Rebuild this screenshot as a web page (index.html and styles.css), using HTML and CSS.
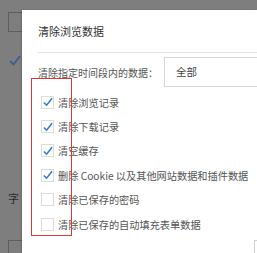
FILE: index.html
```html
<!DOCTYPE html>
<html lang="zh">
<head>
<meta charset="utf-8">
<link rel="stylesheet" href="styles.css">
</head>
<body>
<div class="screen">
  <div class="topbar"></div>
  <div class="side">
    <div class="side-box"></div>
    <div class="side-check">
      <svg width="12" height="11" viewBox="0 0 12 11"><path d="M1 6 L4.5 9.5 L11 1" fill="none" stroke="#3a5f8c" stroke-width="1.8"/></svg>
    </div>
    <div class="side-char">字</div>
    <div class="side-box2"></div>
  </div>
  <div class="dialog">
    <div class="title">清除浏览数据</div>
    <div class="divider"></div>
    <div class="range">
      <span class="range-label">清除指定时间段内的数据：</span>
      <div class="select">全部</div>
    </div>
    <div class="options">
      <label class="opt"><span class="cb on"><svg viewBox="0 0 12 12"><path d="M2 6.5 L5 9.5 L11 2" fill="none" stroke="#2f7bd0" stroke-width="1.7"/></svg></span>清除浏览记录</label>
      <label class="opt"><span class="cb on"><svg viewBox="0 0 12 12"><path d="M2 6.5 L5 9.5 L11 2" fill="none" stroke="#2f7bd0" stroke-width="1.7"/></svg></span>清除下载记录</label>
      <label class="opt"><span class="cb on"><svg viewBox="0 0 12 12"><path d="M2 6.5 L5 9.5 L11 2" fill="none" stroke="#2f7bd0" stroke-width="1.7"/></svg></span>清空缓存</label>
      <label class="opt"><span class="cb on"><svg viewBox="0 0 12 12"><path d="M2 6.5 L5 9.5 L11 2" fill="none" stroke="#2f7bd0" stroke-width="1.7"/></svg></span>删除 Cookie 以及其他网站数据和插件数据</label>
      <label class="opt"><span class="cb"></span>清除已保存的密码</label>
      <label class="opt"><span class="cb"></span>清除已保存的自动填充表单数据</label>
    </div>
    <div class="btn-edge"></div>
  </div>
  <div class="mark"></div>
</div>
</body>
</html>
```
FILE: styles.css
```css
* { box-sizing: border-box; }
html, body { margin: 0; padding: 0; }
body {
  background: #7e7e7e;
  font-family: "Noto Sans CJK SC", "Noto Sans", sans-serif;
  overflow: hidden;
}
.screen {
  position: relative;
  width: 257px;
  height: 253px;
  display: grid;
  grid-template-columns: 22px 1fr;
  grid-template-rows: 10px 1fr;
  overflow: hidden;
}
.topbar {
  grid-column: 1 / 3;
  background: #7e7e7e;
}
.side {
  position: relative;
  background: #7e7e7e;
  padding-top: 2px;
  padding-left: 8px;
  display: flex;
  flex-direction: column;
}
.side-box {
  width: 20px;
  height: 20px;
  border: 1px solid #5e5e5e;
}
.side-check {
  margin-top: 15px;
  margin-left: 1px;
  height: 12px;
}
.side-char {
  margin-top: 133px;
  font-size: 11px;
  color: #2a2a2a;
  line-height: 12px;
}
.side-box2 {
  margin-top: 36px;
  width: 20px;
  height: 20px;
  border: 1px solid #5e5e5e;
}
.dialog {
  position: relative;
  background: #fff;
  padding-left: 16px;
  box-shadow: -1px 0 2px rgba(0,0,0,0.15);
}
.title {
  margin-top: 14px;
  font-size: 11px;
  line-height: 14px;
  color: #333;
  height: 14px;
}
.divider {
  margin-top: 14px;
  height: 1px;
  background: #e3e3e3;
}
.range {
  margin-top: 3px;
  display: flex;
  align-items: center;
  height: 32px;
}
.range-label {
  font-size: 10px;
  color: #555;
  width: 126px;
  white-space: nowrap;
}
.select {
  flex: 1;
  height: 30px;
  border: 1px solid #d8d8d8;
  border-right: none;
  padding-left: 11px;
  font-size: 10.5px;
  line-height: 28px;
  color: #444;
}
.options {
  margin-top: 2px;
  display: flex;
  flex-direction: column;
}
.opt {
  display: flex;
  align-items: center;
  height: 24.4px;
  font-size: 10.2px;
  color: #555;
  white-space: nowrap;
}
.cb {
  width: 13px;
  height: 13px;
  border: 1px solid #dcdcdc;
  margin-left: 3px;
  margin-right: 4px;
  display: flex;
  align-items: center;
  justify-content: center;
  background: #fff;
}
.cb svg { width: 12px; height: 12px; }
.btn-edge {
  position: absolute;
  left: 232px;
  top: 230px;
  width: 10px;
  height: 20px;
  border-left: 1px solid #cfcfcf;
  border-top: 1px solid #cfcfcf;
}
.mark {
  position: absolute;
  left: 31px;
  top: 78px;
  width: 41px;
  height: 158px;
  border: 1px solid #d43a3a;
}
```
